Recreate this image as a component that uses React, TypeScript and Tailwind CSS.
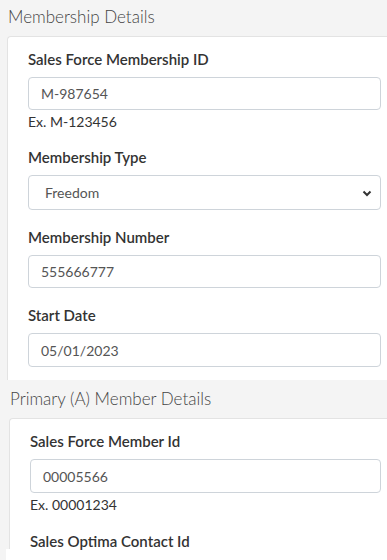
import React from "react";

const font = { fontFamily: "Lato, 'Noto Sans', sans-serif" };

function Label({ children }: { children: React.ReactNode }) {
  return <div className="text-[15px] font-semibold text-[#333] leading-[20px]">{children}</div>;
}

function Input({ value, h = "h-[33px]" }: { value: string; h?: string }) {
  return (
    <div className={`${h} border border-[#ced4da] rounded-[4px] bg-white flex items-center pl-[12px] text-[14px] text-[#555]`}>
      {value}
    </div>
  );
}

function Select({ value }: { value: string }) {
  return (
    <div className="h-[35px] border border-[#ced4da] rounded-[4px] bg-white flex items-center justify-between pl-[16px] pr-[8px] text-[14px] text-[#555]">
      <span>{value}</span>
      <svg width="10" height="8" viewBox="0 0 10 8">
        <path d="M1.5 2.5 L5 6 L8.5 2.5" fill="none" stroke="#333" strokeWidth="2" />
      </svg>
    </div>
  );
}

function Help({ children }: { children: React.ReactNode }) {
  return <div className="text-[14px] text-[#333] leading-[18px] mt-[3px]">{children}</div>;
}

export default function App() {
  return (
    <div className="w-[387px] h-[560px] overflow-hidden bg-[#f4f4f4]" style={font}>
      <div className="pl-[7px]">
        <div className="h-[36px] flex items-center pl-[1px] pb-[2px] text-[17px] text-[#444] font-light">Membership Details</div>
        <div className="bg-white border-l border-t border-[#e3e3e3] rounded-tl-[4px] pl-[20px] pr-[6px] pt-[12px] pb-[13px]">
          <Label>Sales Force Membership ID</Label>
          <div className="mt-[8px]">
            <Input value="M-987654" />
          </div>
          <Help>Ex. M-123456</Help>
          <div className="mt-[16px]">
            <Label>Membership Type</Label>
          </div>
          <div className="mt-[8px]">
            <Select value="Freedom" />
          </div>
          <div className="mt-[17px]">
            <Label>Membership Number</Label>
          </div>
          <div className="mt-[8px]">
            <Input value="555666777" />
          </div>
          <div className="mt-[17px]">
            <Label>Start Date</Label>
          </div>
          <div className="mt-[8px]">
            <Input value="05/01/2023" h="h-[34px]" />
          </div>
        </div>
      </div>
      <div className="pl-[9px]">
        <div className="h-[38px] flex items-center pl-[1px] text-[17px] text-[#444] font-light">Primary (A) Member Details</div>
        <div className="bg-white border-l border-t border-[#e3e3e3] rounded-tl-[4px] pl-[20px] pr-[6px] pt-[12px] h-[131px]">
          <Label>Sales Force Member Id</Label>
          <div className="mt-[8px]">
            <Input value="00005566" h="h-[34px]" />
          </div>
          <Help>Ex. 00001234</Help>
          <div className="mt-[17px]">
            <Label>Sales Optima Contact Id</Label>
          </div>
        </div>
      </div>
      <div className="ml-[6px] h-[20px] bg-white" />
    </div>
  );
}
